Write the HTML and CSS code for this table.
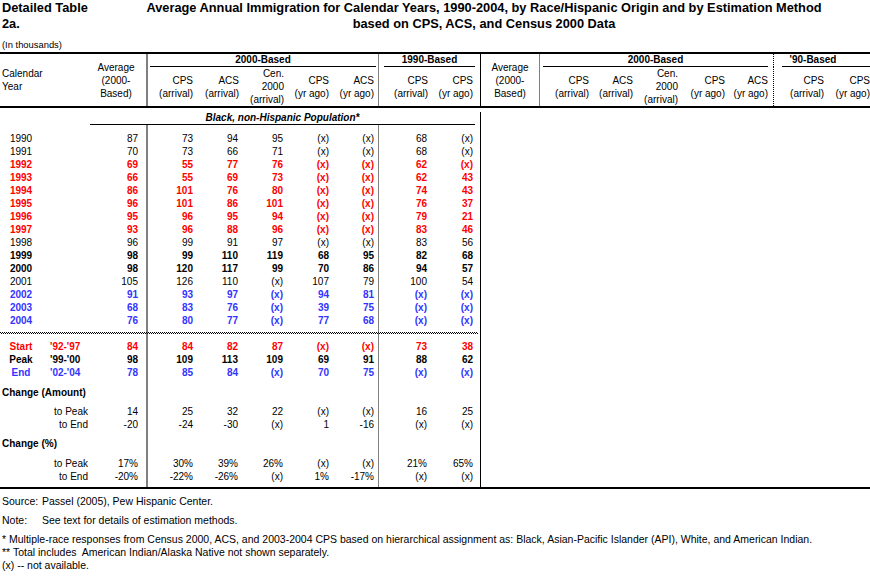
FILE: index.html
```html
<!DOCTYPE html>
<html>
<head>
<meta charset="utf-8">
<link rel="stylesheet" href="styles.css">
</head>
<body>
<div class="page">
  <header class="top">
    <div class="doc-id">Detailed Table<br>2a.</div>
    <h1 class="title">Average Annual Immigration for Calendar Years, 1990-2004, by Race/Hispanic Origin and by Estimation Method<br>based on CPS, ACS, and Census 2000 Data</h1>
  </header>
  <div class="units">(In thousands)</div>

  <div class="table">
    <div class="grid thead">
      <div class="h-cal">Calendar<br>Year</div>
      <div class="h-avg">Average<br>(2000-<br>Based)</div>
      <div class="h-grp span5 gl2 u-l2000"><span>2000-Based</span></div>
      <div class="h-grp span2 gl1 u-l1990"><span>1990-Based</span></div>
      <div class="h-avg h-avg2 bl">Average<br>(2000-<br>Based)</div>
      <div class="h-grp span5 gl1 u-r2000"><span>2000-Based</span></div>
      <div class="h-grp span2 dl u-r90"><span>'90-Based</span></div>

      <div class="hc gl2 p3"><span>CPS<br>(arrival)</span></div>
      <div class="hc p2"><span>ACS<br>(arrival)</span></div>
      <div class="hc p2"><span>Cen.<br>2000<br>(arrival)</span></div>
      <div class="hc p3"><span>CPS<br>(yr ago)</span></div>
      <div class="hc p4"><span>ACS<br>(yr ago)</span></div>
      <div class="hc gl1 p3"><span>CPS<br>(arrival)</span></div>
      <div class="hc p7"><span>CPS<br>(yr ago)</span></div>

      <div class="hc gl1 p2"><span>CPS<br>(arrival)</span></div>
      <div class="hc p3"><span>ACS<br>(arrival)</span></div>
      <div class="hc p3"><span>Cen.<br>2000<br>(arrival)</span></div>
      <div class="hc p3"><span>CPS<br>(yr ago)</span></div>
      <div class="hc p5"><span>ACS<br>(yr ago)</span></div>
      <div class="hc dl p2"><span>CPS<br>(arrival)</span></div>
      <div class="hc"><span>CPS<br>(yr ago)</span></div>
    </div>

    <div class="tbody-top">
      <div class="sp4"></div>
      <div class="grid r pop-row">
        <div class="pop">Black, non-Hispanic Population*</div>
      </div>
    </div>

    <div class="tbody">
      <div class="sp7"></div>
      <div class="grid r"><div class="yr">1990</div><div></div><div>87</div><div>73</div><div>94</div><div>95</div><div>(x)</div><div>(x)</div><div>68</div><div>(x)</div></div>
      <div class="grid r"><div class="yr">1991</div><div></div><div>70</div><div>73</div><div>66</div><div>71</div><div>(x)</div><div>(x)</div><div>68</div><div>(x)</div></div>
      <div class="grid r red"><div class="yr">1992</div><div></div><div>69</div><div>55</div><div>77</div><div>76</div><div>(x)</div><div>(x)</div><div>62</div><div>(x)</div></div>
      <div class="grid r red"><div class="yr">1993</div><div></div><div>66</div><div>55</div><div>69</div><div>73</div><div>(x)</div><div>(x)</div><div>62</div><div>43</div></div>
      <div class="grid r red"><div class="yr">1994</div><div></div><div>86</div><div>101</div><div>76</div><div>80</div><div>(x)</div><div>(x)</div><div>74</div><div>43</div></div>
      <div class="grid r red"><div class="yr">1995</div><div></div><div>96</div><div>101</div><div>86</div><div>101</div><div>(x)</div><div>(x)</div><div>76</div><div>37</div></div>
      <div class="grid r red"><div class="yr">1996</div><div></div><div>95</div><div>96</div><div>95</div><div>94</div><div>(x)</div><div>(x)</div><div>79</div><div>21</div></div>
      <div class="grid r red"><div class="yr">1997</div><div></div><div>93</div><div>96</div><div>88</div><div>96</div><div>(x)</div><div>(x)</div><div>83</div><div>46</div></div>
      <div class="grid r"><div class="yr">1998</div><div></div><div>96</div><div>99</div><div>91</div><div>97</div><div>(x)</div><div>(x)</div><div>83</div><div>56</div></div>
      <div class="grid r bold"><div class="yr">1999</div><div></div><div>98</div><div>99</div><div>110</div><div>119</div><div>68</div><div>95</div><div>82</div><div>68</div></div>
      <div class="grid r bold"><div class="yr">2000</div><div></div><div>98</div><div>120</div><div>117</div><div>99</div><div>70</div><div>86</div><div>94</div><div>57</div></div>
      <div class="grid r"><div class="yr">2001</div><div></div><div>105</div><div>126</div><div>110</div><div>(x)</div><div>107</div><div>79</div><div>100</div><div>54</div></div>
      <div class="grid r blue"><div class="yr">2002</div><div></div><div>91</div><div>93</div><div>97</div><div>(x)</div><div>94</div><div>81</div><div>(x)</div><div>(x)</div></div>
      <div class="grid r blue"><div class="yr">2003</div><div></div><div>68</div><div>83</div><div>76</div><div>(x)</div><div>39</div><div>75</div><div>(x)</div><div>(x)</div></div>
      <div class="grid r blue"><div class="yr">2004</div><div></div><div>76</div><div>80</div><div>77</div><div>(x)</div><div>77</div><div>68</div><div>(x)</div><div>(x)</div></div>
      <div class="sp5"></div>
      <div class="dots"></div>
      <div class="sp6"></div>
      <div class="grid r red"><div class="lab">Start</div><div class="per">'92-'97</div><div>84</div><div>84</div><div>82</div><div>87</div><div>(x)</div><div>(x)</div><div>73</div><div>38</div></div>
      <div class="grid r bold"><div class="lab">Peak</div><div class="per">'99-'00</div><div>98</div><div>109</div><div>113</div><div>109</div><div>69</div><div>91</div><div>88</div><div>62</div></div>
      <div class="grid r blue"><div class="lab">End</div><div class="per">'02-'04</div><div>78</div><div>85</div><div>84</div><div>(x)</div><div>70</div><div>75</div><div>(x)</div><div>(x)</div></div>
      <div class="sp7"></div>
      <div class="grid r"><div class="sec">Change (Amount)</div></div>
      <div class="sp6"></div>
      <div class="grid r"><div></div><div class="to">to Peak</div><div>14</div><div>25</div><div>32</div><div>22</div><div>(x)</div><div>(x)</div><div>16</div><div>25</div></div>
      <div class="grid r"><div></div><div class="to">to End</div><div>-20</div><div>-24</div><div>-30</div><div>(x)</div><div>1</div><div>-16</div><div>(x)</div><div>(x)</div></div>
      <div class="sp6"></div>
      <div class="grid r"><div class="sec">Change (%)</div></div>
      <div class="sp7"></div>
      <div class="grid r"><div></div><div class="to">to Peak</div><div>17%</div><div>30%</div><div>39%</div><div>26%</div><div>(x)</div><div>(x)</div><div>21%</div><div>65%</div></div>
      <div class="grid r"><div></div><div class="to">to End</div><div>-20%</div><div>-22%</div><div>-26%</div><div>(x)</div><div>1%</div><div>-17%</div><div>(x)</div><div>(x)</div></div>
      <div class="sp4"></div>
    </div>
  </div>

  <footer class="notes">
    <p class="note-src"><span class="nlab">Source:</span>Passel (2005), Pew Hispanic Center.</p>
    <p class="note-note"><span class="nlab">Note:</span>See text for details of estimation methods.</p>
    <p class="note-star">* Multiple-race responses from Census 2000, ACS, and 2003-2004 CPS based on hierarchical assignment as: Black, Asian-Pacific Islander (API), White, and American Indian.</p>
    <p>** Total includes&nbsp; American Indian/Alaska Native not shown separately.</p>
    <p>(x) -- not available.</p>
  </footer>
</div>
</body>
</html>
```

FILE: styles.css
```css
* {
  box-sizing: border-box;
  margin: 0;
  padding: 0;
}

html, body {
  width: 870px;
  height: 582px;
  overflow: hidden;
  background: #fff;
}

body {
  font-family: "Liberation Sans", Arial, sans-serif;
  font-size: 10px;
  color: #000;
}

.page {
  width: 870px;
  overflow: hidden;
}

/* ---------- title ---------- */
.top {
  display: flex;
  height: 32px;
}

.doc-id {
  width: 140px;
  padding-left: 2px;
  font-weight: bold;
  font-size: 12.8px;
  line-height: 16px;
}

.title {
  width: 688px;
  text-align: center;
  font-size: 12.8px;
  line-height: 16px;
  font-weight: bold;
  white-space: nowrap;
}

.units {
  font-size: 9.4px;
  line-height: 13px;
  margin: 6px 0 1px;
  padding-left: 2px;
}

/* ---------- table ---------- */
.table {
  width: 870px;
}

.grid {
  display: grid;
  grid-template-columns: 48px 42px 56px 50px 45px 45px 46px 46px 53px 49px 59px 52px 45px 45px 47px 45px 53px 44px;
}

.thead {
  grid-template-rows: 13px 39px;
  border-top: 2px solid #000;
  border-bottom: 2px solid #000;
  line-height: 13px;
}

.gl2 { box-shadow: inset 2px 0 0 #808080; }
.gl1 { box-shadow: inset 1px 0 0 #808080; }
.bl  { box-shadow: inset 1px 0 0 #000; }
.dl  { border-left: 1px dotted #000; }

.h-cal {
  grid-column: span 2;
  grid-row: span 2;
  align-self: center;
  padding-left: 2px;
}

.h-avg {
  grid-row: span 2;
  align-self: stretch;
  display: flex;
  align-items: center;
  justify-content: center;
  text-align: center;
  padding-right: 4px;
}

.h-avg2 {
  padding-right: 0;
  padding-left: 1px;
}

.h-grp {
  font-weight: bold;
  text-align: center;
}

.h-grp span {
  display: block;
  line-height: 12px;
  border-bottom: 1px solid #000;
}

.span5 { grid-column: span 5; }
.span2 { grid-column: span 2; }

.u-l2000 span { margin: 0 2px 0 4px; }
.u-l1990 span { margin: 0 5px 0 6px; }
.u-r2000 span { margin: 0 5px 0 4px; }
.u-r90 span { margin: 0 0 0 8px; padding-right: 26px; }

.hc {
  display: flex;
  align-items: center;
  justify-content: flex-end;
  text-align: right;
  white-space: nowrap;
}

.p2 { padding-right: 2px; }
.p3 { padding-right: 3px; }
.p4 { padding-right: 4px; }
.p5 { padding-right: 5px; }
.p7 { padding-right: 7px; }

/* ---------- body ---------- */
.tbody-top {
  width: 870px;
}

.pop-row {
  background: linear-gradient(#000, #000) 480px 0 / 1px 100% no-repeat;
}

.pop {
  grid-column: 3 / 11;
  margin-right: 5px;
  border-bottom: 1px solid #000;
  text-align: center;
  font-weight: bold;
  font-style: italic;
  line-height: 12px;
}

.tbody {
  width: 870px;
  border-bottom: 2px solid #000;
  background:
    linear-gradient(#808080, #808080) 146px 0 / 2px 100% no-repeat,
    linear-gradient(#808080, #808080) 378px 0 / 1px 100% no-repeat,
    linear-gradient(#000, #000) 480px 0 / 1px 100% no-repeat;
}

.r {
  height: 13px;
  line-height: 13px;
  white-space: nowrap;
}

.r > :nth-child(n+3) { text-align: right; }
.r > :nth-child(3) { padding-right: 8px; }
.r > :nth-child(4),
.r > :nth-child(5),
.r > :nth-child(6),
.r > :nth-child(7) { padding-right: 3px; }
.r > :nth-child(8),
.r > :nth-child(9) { padding-right: 4px; }
.r > :nth-child(10) { padding-right: 7px; }

.yr, .lab {
  text-align: center;
  padding-right: 6px;
}

.per {
  padding-left: 2px;
}

.to {
  text-align: right;
  padding-right: 2px;
}

.sec {
  grid-column: 1 / -1;
  padding-left: 2px;
  font-weight: bold;
}

.red { color: #ff0000; font-weight: bold; }
.blue { color: #3333ff; font-weight: bold; }
.bold { font-weight: bold; }

.sp4 { height: 4px; }
.sp5 { height: 5px; }
.sp6 { height: 6px; }
.sp7 { height: 7px; }

.dots {
  width: 478px;
  height: 2px;
  background:
    repeating-linear-gradient(90deg, #000 0 1px, transparent 1px 2px) 0 0 / 100% 1px no-repeat,
    repeating-linear-gradient(90deg, transparent 0 1px, #000 1px 2px) 0 1px / 100% 1px no-repeat;
}

/* ---------- notes ---------- */
.notes {
  font-size: 10.5px;
  line-height: 13px;
  padding-left: 2px;
  white-space: nowrap;
}

.nlab {
  display: inline-block;
  width: 40px;
}

.note-src { margin-top: 6px; }
.note-note { margin-top: 6px; }
.note-star { margin-top: 6px; }
```
